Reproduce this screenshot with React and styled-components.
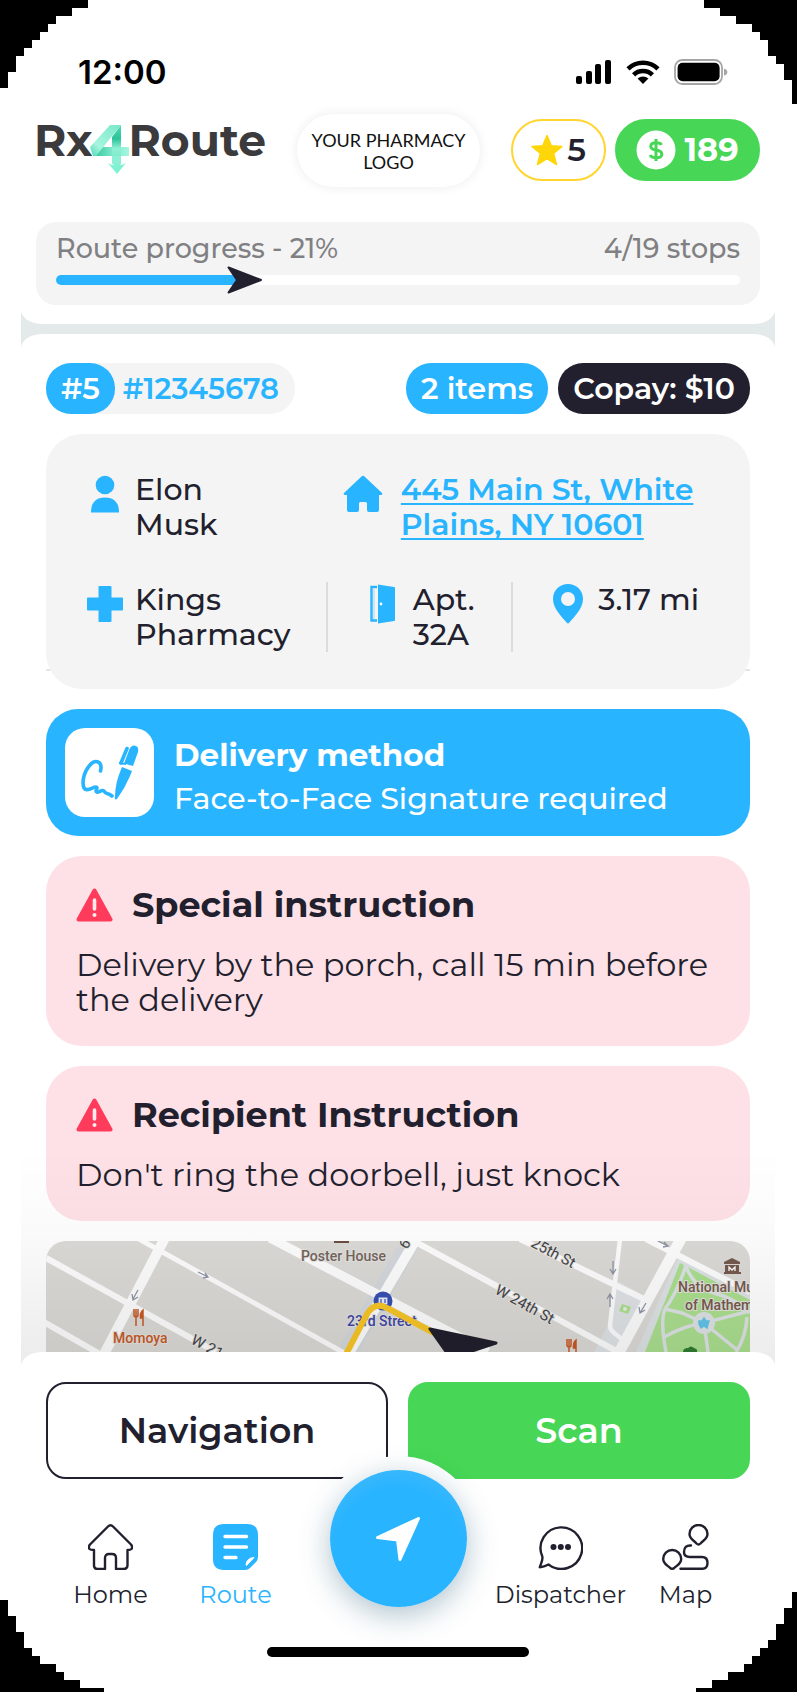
import React from "react";
import styled, { createGlobalStyle } from "styled-components";

const c = {
  blue: "#29b4ff",
  green: "#47d656",
  dark: "#221f2e",
  grey: "#f4f4f4",
  pink: "#fee1e6",
  red: "#ff3b5c",
};

const Global = createGlobalStyle`
  *, *::before, *::after { box-sizing: border-box; }
  body {
    margin: 0;
    background: #fff;
    color: ${c.dark};
    font-family: Montserrat, Inter, "Liberation Sans", sans-serif;
  }
  button { font-family: inherit; cursor: pointer; }
  h2, p { margin: 0; }
  svg { display: block; flex: none; }
`;

const Page = styled.div`
  position: relative;
  min-height: 100vh;
  overflow: hidden;
`;

const Corner = styled.svg`
  position: absolute;
  z-index: 5;
  pointer-events: none;
  ${(p) => (p.$bottom ? "bottom: 0;" : "top: 0;")}
  ${(p) => (p.$right ? "right: 0;" : "left: 0;")}
`;

const StatusBar = styled.div`
  display: flex;
  align-items: center;
  justify-content: space-between;
  height: 88px;
  padding: 56px 69px 0 78px;
`;

const Clock = styled.time`
  font: 600 33px/32px Inter, sans-serif;
  color: #000;
`;

const StatusIcons = styled.div`
  display: flex;
  align-items: center;
  gap: 14px;
`;

const Shell = styled.div`
  margin: 0 22px 0 21px;
  background: #e4eaea;
`;

const Top = styled.div`
  padding: 26px 15px 19px;
  background: #fff;
  border-radius: 0 0 22px 22px / 0 0 14px 14px;
`;

const Header = styled.header`
  display: flex;
  align-items: center;
  justify-content: space-between;
  height: 73px;
`;

const Logo = styled.div`
  display: flex;
  align-items: center;
  height: 52px;
  margin-left: -2px;
  padding-bottom: 22px;
  font-size: 44px;
  font-weight: 700;
  line-height: 44px;
  color: #3b3a3c;

  svg { margin: 20px 0 0 -3px; }
`;

const PharmacyLogo = styled.div`
  display: flex;
  align-items: center;
  justify-content: center;
  width: 183px;
  height: 73px;
  border-radius: 37px;
  background: #fff;
  box-shadow: 0 0 12px rgba(0, 0, 0, 0.08);
  text-align: center;
  font: 400 18px/22px Lato, sans-serif;
  color: #111;
`;

const Scores = styled.div`
  display: flex;
  align-items: center;
  gap: 9px;
  padding-bottom: 2px;
`;

const ScorePill = styled.div`
  display: flex;
  align-items: center;
  justify-content: center;
  gap: ${(p) => (p.$green ? 8 : 4)}px;
  width: ${(p) => (p.$green ? 145 : 95)}px;
  height: 62px;
  border-radius: 31px;
  border: 2px solid ${(p) => (p.$green ? c.green : "#ffd52e")};
  background: ${(p) => (p.$green ? c.green : "#fff")};
  color: ${(p) => (p.$green ? "#fff" : c.dark)};
  font-size: 32px;
  font-weight: ${(p) => (p.$green ? 700 : 600)};
  line-height: 36px;
`;

const Progress = styled.section`
  margin-top: 35px;
  height: 83px;
  padding: 9px 20px 0;
  border-radius: 20px;
  background: ${c.grey};
`;

const ProgressLabels = styled.div`
  display: flex;
  justify-content: space-between;
  font-size: 27px;
  font-weight: 500;
  line-height: 36px;
  color: #808083;
`;

const Track = styled.div`
  display: flex;
  align-items: center;
  height: 10px;
  margin-top: 8px;
  border-radius: 5px;
  background: #fff;
`;

const Fill = styled.div`
  height: 10px;
  border-radius: 5px 0 0 5px;
  background: ${c.blue};
`;

const PointerIcon = styled.svg`
  margin-left: -14px;
`;

const Body = styled.main`
  position: relative;
  display: flex;
  flex-direction: column;
  gap: 20px;
  margin-top: 10px;
  padding: 29px 25px 14px;
  background: #fff;
  border-radius: 22px 22px 0 0 / 14px 14px 0 0;

  &::after {
    content: "";
    position: absolute;
    inset: auto 0 0 0;
    height: 220px;
    background: linear-gradient(rgba(0, 0, 0, 0), rgba(0, 0, 0, 0.02) 40%, rgba(0, 0, 0, 0.08));
    pointer-events: none;
  }
`;

const Tags = styled.div`
  display: flex;
  gap: 10px;
`;

const OrderTag = styled.div`
  display: flex;
  margin-right: auto;
  padding-right: 16px;
  gap: 8px;
  border-radius: 25px;
  background: ${c.grey};
  color: ${c.blue};
  font-size: 29px;
  font-weight: 600;
  line-height: 51px;
`;

const Tag = styled.span`
  padding: 0 15px;
  border-radius: 25px;
  background: ${(p) => (p.$dark ? c.dark : c.blue)};
  color: #fff;
  font-size: 30px;
  font-weight: 600;
  line-height: 51px;
`;

const InfoFrame = styled.div`
  background: linear-gradient(#e4e4e4, #e4e4e4) 0 calc(100% - 18px) / 100% 2px no-repeat;
`;

const InfoCard = styled.section`
  display: flex;
  flex-direction: column;
  gap: 40px;
  padding: 38px 0 37px 41px;
  border-radius: 36px;
  background: ${c.grey};
`;

const InfoRow = styled.div`
  display: grid;
  grid-template-columns: ${(p) => p.$cols};
`;

const InfoCell = styled.div`
  display: flex;
  gap: ${(p) => (p.$wide ? 20 : 12)}px;
  padding-left: ${(p) => (p.$divided ? 37 : 0)}px;
  border-left: ${(p) => (p.$divided ? "2px solid #dcdcdc" : "none")};
  font-size: 30px;
  font-weight: 500;
  line-height: 35px;
`;

const IconSlot = styled.span`
  display: flex;
  align-items: center;
  justify-content: center;
  flex: none;
  width: 36px;
  height: 44px;
`;

const Address = styled.a`
  color: ${c.blue};
  font-weight: 600;
  text-decoration: underline;
  text-decoration-thickness: 2px;
  text-underline-offset: 3px;
  text-decoration-skip-ink: none;
`;

const Delivery = styled.section`
  display: flex;
  align-items: center;
  gap: 20px;
  height: 127px;
  padding: 0 19px;
  border-radius: 32px;
  background: ${c.blue};
  color: #fff;
`;

const DeliveryInfo = styled.div`
  padding-top: 8px;
`;

const SignatureBox = styled.div`
  display: flex;
  align-items: center;
  justify-content: center;
  width: 89px;
  height: 89px;
  border-radius: 20px;
  background: #fff;
`;

const DeliveryTitle = styled.h2`
  font-size: 31px;
  font-weight: 700;
  line-height: 44px;
`;

const DeliveryText = styled.p`
  font-size: 30px;
  font-weight: 500;
  line-height: 44px;
`;

const Notice = styled.section`
  padding: 29px 30px;
  border-radius: 36px;
  background: ${c.pink};
`;

const NoticeTitle = styled.h2`
  display: flex;
  align-items: center;
  gap: 19px;
  font-size: 35px;
  font-weight: 700;
  line-height: 40px;
`;

const NoticeText = styled.p`
  margin-top: 22px;
  font-size: 32px;
  line-height: 35px;
`;

const MapView = styled.svg`
  width: 100%;
  height: 111px;
  border-radius: 20px 20px 0 0;
`;

const Sheet = styled.footer`
  position: relative;
  margin: -14px 22px 0 21px;
  padding: 30px 25px 35px;
  background: #fff;
  border-radius: 22px 22px 0 0 / 14px 14px 0 0;
`;

const Actions = styled.div`
  display: grid;
  grid-template-columns: 1fr 1fr;
  gap: 20px;
`;

const Action = styled.button`
  height: 97px;
  border: 2px solid ${(p) => (p.$primary ? c.green : c.dark)};
  border-radius: 20px;
  background: ${(p) => (p.$primary ? c.green : "#fff")};
  color: ${(p) => (p.$primary ? "#fff" : c.dark)};
  font-size: 35px;
  font-weight: 600;
`;

const Nav = styled.nav`
  display: grid;
  grid-template-columns: minmax(0, 5fr) minmax(0, 5fr) minmax(0, 8fr) minmax(0, 5fr) minmax(0, 5fr);
  justify-items: center;
  padding: 0 2px;
`;

const NavItem = styled.a`
  display: flex;
  flex-direction: column;
  align-items: center;
  gap: 10px;
  padding-top: 45px;
  color: ${(p) => (p.$active ? c.blue : c.dark)};
  font-size: 24px;
  font-weight: 400;
  line-height: 30px;
  text-decoration: none;
`;

const FabRing = styled.div`
  position: relative;
  margin-top: -23px;
  padding: 14px;
  border-radius: 50%;
  background: #fff;
`;

const Fab = styled.button`
  display: flex;
  align-items: center;
  justify-content: center;
  width: 137px;
  height: 137px;
  border: 0;
  border-radius: 50%;
  background: radial-gradient(circle at 50% 60%, ${c.blue} 60%, #4dbcfa);
  box-shadow: 0 8px 30px rgba(20, 80, 110, 0.34);
`;

const HomeBar = styled.div`
  width: 262px;
  height: 10px;
  margin: 26px auto 0;
  border-radius: 5px;
  background: #000;
`;

const line = {
  fill: "none",
  stroke: "currentColor",
  strokeWidth: 2.4,
  strokeLinecap: "round",
  strokeLinejoin: "round",
};

function Corners() {
  return (
    <>
      <Corner width="88" height="88" shapeRendering="crispEdges" aria-hidden="true">
        <path d="M0 0H88V8H72V16H56V24H48V32H40V40H32V48H24V56H16V72H8V88H0Z" />
      </Corner>
      <Corner $right width="93" height="104" shapeRendering="crispEdges" aria-hidden="true">
        <path d="M0 0H93V104H88V80H80V64H72V56H64V40H56V32H48V24H32V16H16V8H0Z" />
      </Corner>
      <Corner $bottom width="104" height="92" shapeRendering="crispEdges" aria-hidden="true">
        <path d="M0 0H8V16H16V32H24V48H32V56H40V64H56V72H64V80H80V88H104V92H0Z" />
      </Corner>
      <Corner $bottom $right width="101" height="100" shapeRendering="crispEdges" aria-hidden="true">
        <path d="M101 0H96V16H88V32H80V48H72V56H64V64H56V72H48V80H32V88H16V96H0V100H101Z" />
      </Corner>
    </>
  );
}

function SignalIcon() {
  return (
    <svg width="36" height="24" aria-hidden="true">
      <rect x="0" y="16" width="6" height="8" rx="2" />
      <rect x="10" y="11" width="6" height="13" rx="2" />
      <rect x="19" y="4" width="6" height="20" rx="2" />
      <rect x="29" y="0" width="6" height="24" rx="2" />
    </svg>
  );
}

function WifiIcon() {
  return (
    <svg width="34" height="24" viewBox="0 0 34 24" aria-hidden="true">
      <g fill="none" stroke="#000" strokeWidth="4.6">
        <path d="M2 8.8A21.5 21.5 0 0 1 32 8.8" />
        <path d="M7.6 14.8A13.5 13.5 0 0 1 26.4 14.8" />
      </g>
      <path d="M11.6 18.6A8 8 0 0 1 22.4 18.6L17 24Z" />
    </svg>
  );
}

function BatteryIcon() {
  return (
    <svg width="54" height="26" viewBox="0 0 54 26" aria-hidden="true">
      <rect x="1" y="1" width="47" height="24" rx="7.5" fill="none" stroke="#a5a5a5" strokeWidth="1.8" />
      <rect x="3.6" y="3.8" width="42" height="18.4" rx="5" />
      <path d="M50 9.5Q53.4 10.6 53.4 13T50 16.8Z" fill="#a5a5a5" />
    </svg>
  );
}

function FourMark() {
  return (
    <svg width="39" height="51" viewBox="0 0 39 51" role="img" aria-label="4">
      <defs>
        <linearGradient id="band" x1="0" y1="1" x2="1" y2="0">
          <stop offset="0" stopColor="#4fd8b2" />
          <stop offset="0.3" stopColor="#a6f5de" />
          <stop offset="1" stopColor="#79e8c9" />
        </linearGradient>
        <linearGradient id="stem" x1="0" y1="0" x2="0" y2="1">
          <stop offset="0" stopColor="#4fdcb4" />
          <stop offset="0.35" stopColor="#2cc39a" />
          <stop offset="0.6" stopColor="#8ff0d4" />
          <stop offset="1" stopColor="#6fe6c6" />
        </linearGradient>
        <linearGradient id="bar" x1="0" y1="0" x2="1" y2="0">
          <stop offset="0" stopColor="#2cc59c" />
          <stop offset="0.55" stopColor="#7fe9cc" />
          <stop offset="1" stopColor="#a4f6df" />
        </linearGradient>
      </defs>
      <path d="M3 32L11 23H39V32Z" fill="url(#bar)" />
      <path d="M31 1V40H22V13Z" fill="url(#stem)" />
      <path d="M20 1H31L6 32H3L0 23Z" fill="url(#band)" />
      <path d="M18 39L22 41L27 39L32 41L36 39L27 50Z" fill="#7ff2d3" />
      <path d="M22 32H31V40H22Z" fill="#8df0d6" />
    </svg>
  );
}

function WarningIcon() {
  return (
    <svg width="37" height="34" viewBox="0 0 37 34" aria-hidden="true">
      <path
        d="M18.5 2.5L34.5 31.5H2.5Z"
        fill={c.red}
        stroke={c.red}
        strokeWidth="4"
        strokeLinejoin="round"
      />
      <path d="M18.5 12V21" stroke="#ffe9ed" strokeWidth="3.6" strokeLinecap="round" />
      <circle cx="18.5" cy="27" r="2" fill="#ffe9ed" />
    </svg>
  );
}

function SignatureIcon() {
  return (
    <svg width="58" height="56" viewBox="0 0 58 56" aria-hidden="true">
      <path
        d="M19.5 26C22 16 14 14 9 20C2 28 1 38 3 43C6 48 13 41 15 42C18 43 13 46 16 47C19 48 20 44 23 46C25 50 26 47 31 51"
        fill="none"
        stroke={c.blue}
        strokeWidth="3.6"
        strokeLinecap="round"
        strokeLinejoin="round"
      />
      <path d="M43 18.5L48.5 4Q51 -1 55 1Q58 2 57 7L52 21Z" fill={c.blue} />
      <path d="M40 18L46 3.5" stroke={c.blue} strokeWidth="3.6" strokeLinecap="round" />
      <path d="M41 22L51 26L49 31Q44 43 36 54Q33 55.5 34 51Q34 38 41 22Z" fill={c.blue} />
      <path d="M38 18L45 19" stroke={c.blue} strokeWidth="2" />
    </svg>
  );
}

function PersonIcon() {
  return (
    <svg width="28" height="38" viewBox="0 0 28 38" fill={c.blue} aria-hidden="true">
      <circle cx="14" cy="10" r="9.3" />
      <path d="M0 37.5Q0 22.5 14 22.5T28 37.5Z" />
    </svg>
  );
}

function HouseIcon() {
  return (
    <svg width="40" height="38" viewBox="0 0 40 38" fill={c.blue} aria-hidden="true">
      <path d="M18.5 1.5Q20 0 21.5 1.5L39 18Q40 20 38 20H36V35Q36 37 34 37H26Q24 37 24 35V28.5Q24 27 22.5 27H17.5Q16 27 16 28.5V35Q16 37 14 37H6Q4 37 4 35V20H2Q0 20 1 18Z" />
    </svg>
  );
}

function CrossIcon() {
  return (
    <svg width="36" height="36" viewBox="0 0 36 36" fill={c.blue} aria-hidden="true">
      <path d="M12.5 0H23.5Q24.5 0 24.5 1V11.5H35Q36 11.5 36 12.5V23.5Q36 24.5 35 24.5H24.5V35Q24.5 36 23.5 36H12.5Q11.5 36 11.5 35V24.5H1Q0 24.5 0 23.5V12.5Q0 11.5 1 11.5H11.5V1Q11.5 0 12.5 0Z" />
    </svg>
  );
}

function DoorIcon() {
  return (
    <svg width="25" height="40" viewBox="0 0 25 40" aria-hidden="true">
      <path d="M7 3H1.5V36.5H7" fill="none" stroke={c.blue} strokeWidth="2.4" />
      <path d="M4 5V35" stroke={c.blue} strokeWidth="1" opacity=".4" />
      <path d="M8 0.5L24 3Q25 3 25 4V36Q25 37 24 37L8 39.5Z" fill={c.blue} />
      <circle cx="11" cy="20" r="1.4" fill="#fff" />
    </svg>
  );
}

function PinIcon() {
  return (
    <svg width="30" height="40" viewBox="0 0 30 40" aria-hidden="true">
      <path
        d="M15 0C6.5 0 0 6.5 0 15C0 25 10 34 13.8 38.8Q15 40 16.2 38.8C20 34 30 25 30 15C30 6.5 23.5 0 15 0ZM15 8A7 7 0 1 1 15 22A7 7 0 1 1 15 8Z"
        fill={c.blue}
        fillRule="evenodd"
      />
    </svg>
  );
}

function ForkKnife({ x, y }) {
  return (
    <g transform={`translate(${x} ${y})`} fill="#c85a26" stroke="#c85a26">
      <path d="M-5 -9V-3Q-5 -1 -3 -1T-1 -3V-9M-3 -9V8" fill="none" strokeWidth="1.5" />
      <path d="M4 8V-8Q1 -6 1.5 0H4" strokeWidth="1.5" />
    </g>
  );
}

function RouteMap() {
  return (
    <MapView viewBox="0 0 704 111" preserveAspectRatio="xMidYMin slice" role="img" aria-label="Map of the next stop">
      <rect width="704" height="111" fill="#dbdad6" />
      <path d="M572 40L600 56L575 111H548L562 84Z" fill="#dfe3e6" />
      <path d="M634 12L704 48V111H590Z" fill="#dde2e4" />
      <path d="M634 22L704 59V111H599Z" fill="#abdf8f" />
      <g fill="none" stroke="#dde2e4" strokeWidth="3.5">
        <path d="M638 20Q646 46 668 52T704 72M619 68L636 72L658 82L704 70M658 82L662 111M658 82L690 108M658 82Q640 84 618 96M619 68Q614 80 620 111M640 24Q632 50 619 68" />
        <path d="M690 111Q700 96 701 76" />
      </g>
      <circle cx="658" cy="82" r="11" fill="#dde2e4" />
      <path d="M658 77L660 80L663 80L662 83L661 87L658 85L655 87L653 83L653 80L656 80Z" fill="#62c4e8" stroke="#62c4e8" strokeWidth="1.5" />
      <path d="M576 63L585 66L582 73L573 70Z" fill="#abdf8f" />
      <circle cx="579" cy="68" r="2" fill="#e6eee2" />

      <path d="M370 -8L299 115" fill="none" stroke="#d4d8dc" strokeWidth="19" />
      <g fill="none" stroke="#fdfdfd" strokeLinejoin="round">
        <path d="M0 17L170 111" strokeWidth="6" />
        <path d="M93 -2L300 113" strokeWidth="5" />
        <path d="M-4 80L54 113" strokeWidth="6" />
        <path d="M224 -3L442 111" strokeWidth="9" />
        <path d="M120 -5L56 117" strokeWidth="10" />
        <path d="M372 -5L300 117" strokeWidth="10" />
        <path d="M366 -1L572 111" strokeWidth="6" />
        <path d="M474 -2L600 59" strokeWidth="6" />
        <path d="M574 -2L564 84Q564 88 567 91L583 104" strokeWidth="4.5" />
        <path d="M637 -6L570 117" strokeWidth="11" />
        <path d="M600 -2L704 51" strokeWidth="6" />
      </g>
      <g fill="none" stroke="#8f95a5" strokeWidth="1.3">
        <path d="M92 49L87 58M86 53L87 59L92 56M152 31L162 36M159 32L162 36L157 37M567 20V32M564 28L567 33L570 28M564 66V54M561 58L564 53L567 58M600 62L594 72M593 66L594 72L599 69M612 0L622 5M618 1L622 5L617 6" />
      </g>

      <circle cx="337" cy="60" r="9.5" fill="#3950b4" />
      <path d="M332 56H342V64H332ZM335 58V62M339 58V62" fill="#e8ecff" stroke="#3950b4" strokeWidth="1.2" />

      <g fontFamily="Roboto, sans-serif" fontSize="14" fontWeight="500" stroke="#e4e3df" strokeWidth="2" paintOrder="stroke">
        <text x="255" y="20" fill="#75655f">Poster House</text>
        <text x="67" y="102" fill="#c85a26">Momoya</text>
        <text x="301" y="85" fill="#4145a8">23rd Street</text>
        <text x="632" y="51" fill="#75594e">National Mu</text>
        <text x="639" y="69" fill="#75594e">of Mathem</text>
        <g fill="#44454a" fontWeight="400" fontSize="15">
          <text transform="translate(144 102) rotate(28)">W 21</text>
          <text transform="translate(448 52) rotate(29)">W 24th St</text>
          <text transform="translate(484 5) rotate(28)">25th St</text>
          <text transform="translate(361 9) rotate(-60)">6</text>
        </g>
      </g>
      <ForkKnife x={93} y={77} />
      <ForkKnife x={526} y={107} />
      <rect x="288" y="0" width="15" height="2" fill="#6b4f45" />
      <path d="M678 21L686 17L694 21V23H678ZM679 24H693V31H679ZM678 31H695V33H678Z" fill="#75594e" />
      <path d="M683 30V26L686 29L689 26V30" fill="none" stroke="#fff" strokeWidth="1.3" />
      <path d="M637 111Q637 107 642 107Q645 104 648 107Q652 108 651 111Z" fill="#2f7d32" />

      <path d="M299 115L321 73Q329 60 341 67L388 92" fill="none" stroke="#f8c626" strokeWidth="6" />
      <path d="M384 88L450 102L420 112H401Z" fill={c.dark} stroke={c.dark} strokeWidth="3" strokeLinejoin="round" />
    </MapView>
  );
}

function HomeIcon() {
  return (
    <svg width="45" height="46" viewBox="0 0 45 46" aria-hidden="true">
      <path
        {...line}
        d="M20 2.5Q22.5 0 25 2.5L43 20.5Q45 23 43.5 25Q42.5 26 39.5 26V41Q39.5 45 35.5 45H28V34Q28 30 24 30H21Q17 30 17 34V45H9.5Q6 45 6 41V26Q2.5 26 1.5 25Q0 23 2 20.5Z"
      />
    </svg>
  );
}

function RouteIcon() {
  return (
    <svg width="45" height="46" viewBox="0 0 45 46" aria-hidden="true">
      <path d="M11 0H34Q45 0 45 11V33Q45 36 43 38L37 44Q35 46 32 46H11Q0 46 0 35V11Q0 0 11 0Z" fill={c.blue} />
      <path d="M12 12.5H33.5M12 23H33.5M12 33.5H23" stroke="#fff" strokeWidth="3.4" strokeLinecap="round" />
      <path d="M33 41Q33.5 34 41 33.5L33.5 41.5Z" fill="#fff" stroke="#fff" strokeLinejoin="round" />
    </svg>
  );
}

function ChatIcon() {
  return (
    <svg width="45" height="46" viewBox="0 0 45 46" aria-hidden="true">
      <path {...line} d="M10.5 40.5A20.8 20.8 0 1 0 4.3 32.5C5.2 36 3 39 1.8 43.2Q6 42.8 10.5 40.5Z" />
      <circle cx="15.5" cy="23" r="3" fill="currentColor" />
      <circle cx="22.8" cy="23" r="3" fill="currentColor" />
      <circle cx="30" cy="23" r="3" fill="currentColor" />
    </svg>
  );
}

function MapIcon() {
  return (
    <svg width="47" height="46" viewBox="0 0 47 46" aria-hidden="true">
      <path {...line} d="M27.5 10A9 9 0 1 1 45.5 10C45.5 15 41 16.5 38.5 19.5Q36.5 21.5 34.5 19.5C32 16.5 27.5 15 27.5 10Z" />
      <path {...line} d="M1.2 35A9 9 0 1 1 19.2 35C19.2 40 14.7 41.5 12.2 44Q10.2 45.6 8.2 44C5.7 41.5 1.2 40 1.2 35Z" />
      <path {...line} d="M29 21.5Q22 21 22 28Q22 33 28 33H40Q45.5 33 45.5 39T40 44.7H18.5" />
    </svg>
  );
}

export default function App() {
  return (
    <Page>
      <Global />
      <Corners />
      <StatusBar>
        <Clock>12:00</Clock>
        <StatusIcons>
          <SignalIcon />
          <WifiIcon />
          <BatteryIcon />
        </StatusIcons>
      </StatusBar>

      <Shell>
        <Top>
          <Header>
            <Logo>
              Rx
              <FourMark />
              Route
            </Logo>
            <PharmacyLogo>
              YOUR PHARMACY
              <br />
              LOGO
            </PharmacyLogo>
            <Scores>
              <ScorePill>
                <svg width="32" height="32" viewBox="0 0 32 32" aria-hidden="true">
                  <path
                    d="M16 1.5L20.3 11.8L31 12.4L22.6 19.5L25.5 30.5L16 24.5L6.5 30.5L9.4 19.5L1 12.4L11.7 11.8Z"
                    fill="#ffd60a"
                    stroke="#ffd60a"
                    strokeWidth="1.5"
                    strokeLinejoin="round"
                  />
                </svg>
                5
              </ScorePill>
              <ScorePill $green>
                <svg width="40" height="40" viewBox="0 0 40 40" aria-hidden="true">
                  <circle cx="20" cy="20" r="19.5" fill="#fff" />
                  <path
                    d="M25.5 14.8Q24.5 12.8 20 12.8Q14.8 12.8 14.8 16.3Q14.8 19.4 20 20Q25.8 20.8 25.8 24.2Q25.8 27.8 20.2 27.8Q15.2 27.8 14.2 25M20 9V31"
                    fill="none"
                    stroke={c.green}
                    strokeWidth="3"
                  />
                </svg>
                189
              </ScorePill>
            </Scores>
          </Header>

          <Progress>
            <ProgressLabels>
              <span>Route progress - 21%</span>
              <span>4/19 stops</span>
            </ProgressLabels>
            <Track>
              <Fill style={{ width: "27%" }} />
              <PointerIcon width="36" height="28" viewBox="0 0 36 28" aria-hidden="true">
                <path
                  d="M1.5 1.5L34 14L1.5 26.5L10 14Z"
                  fill={c.dark}
                  stroke={c.dark}
                  strokeWidth="2"
                  strokeLinejoin="round"
                />
              </PointerIcon>
            </Track>
          </Progress>
        </Top>

        <Body>
          <Tags>
            <OrderTag>
              <Tag>#5</Tag>
              #12345678
            </OrderTag>
            <Tag>2 items</Tag>
            <Tag $dark>Copay: $10</Tag>
          </Tags>

          <InfoFrame>
            <InfoCard>
              <InfoRow $cols="7fr 11fr">
                <InfoCell>
                  <IconSlot><PersonIcon /></IconSlot>
                  <span>Elon<br />Musk</span>
                </InfoCell>
                <InfoCell $wide>
                  <IconSlot><HouseIcon /></IconSlot>
                  <Address href="#address">
                    445 Main St, White
                    <br />
                    Plains, NY 10601
                  </Address>
                </InfoCell>
              </InfoRow>
              <InfoRow $cols="9fr 7fr 9fr">
                <InfoCell>
                  <IconSlot><CrossIcon /></IconSlot>
                  <span>Kings<br />Pharmacy</span>
                </InfoCell>
                <InfoCell $divided>
                  <IconSlot><DoorIcon /></IconSlot>
                  <span>Apt.<br />32A</span>
                </InfoCell>
                <InfoCell $divided>
                  <IconSlot><PinIcon /></IconSlot>
                  <span>3.17 mi</span>
                </InfoCell>
              </InfoRow>
            </InfoCard>
          </InfoFrame>

          <Delivery>
            <SignatureBox><SignatureIcon /></SignatureBox>
            <DeliveryInfo>
              <DeliveryTitle>Delivery method</DeliveryTitle>
              <DeliveryText>Face-to-Face Signature required</DeliveryText>
            </DeliveryInfo>
          </Delivery>

          <Notice>
            <NoticeTitle><WarningIcon />Special instruction</NoticeTitle>
            <NoticeText>Delivery by the porch, call 15 min before the delivery</NoticeText>
          </Notice>

          <Notice>
            <NoticeTitle><WarningIcon />Recipient Instruction</NoticeTitle>
            <NoticeText>Don't ring the doorbell, just knock</NoticeText>
          </Notice>

          <RouteMap />
        </Body>
      </Shell>

      <Sheet>
        <Actions>
          <Action type="button">Navigation</Action>
          <Action type="button" $primary>Scan</Action>
        </Actions>
        <Nav>
          <NavItem href="#home"><HomeIcon />Home</NavItem>
          <NavItem href="#route" $active aria-current="page"><RouteIcon />Route</NavItem>
          <FabRing>
            <Fab type="button" aria-label="Start navigation">
              <svg width="46" height="46" viewBox="0 0 46 46" aria-hidden="true">
                <path
                  d="M43.5 2.5L25 43.5L22.5 24L2.5 21.5Z"
                  fill="#fff"
                  stroke="#fff"
                  strokeWidth="3"
                  strokeLinejoin="round"
                />
              </svg>
            </Fab>
          </FabRing>
          <NavItem href="#dispatcher"><ChatIcon />Dispatcher</NavItem>
          <NavItem href="#map"><MapIcon />Map</NavItem>
        </Nav>
        <HomeBar />
      </Sheet>
    </Page>
  );
}
